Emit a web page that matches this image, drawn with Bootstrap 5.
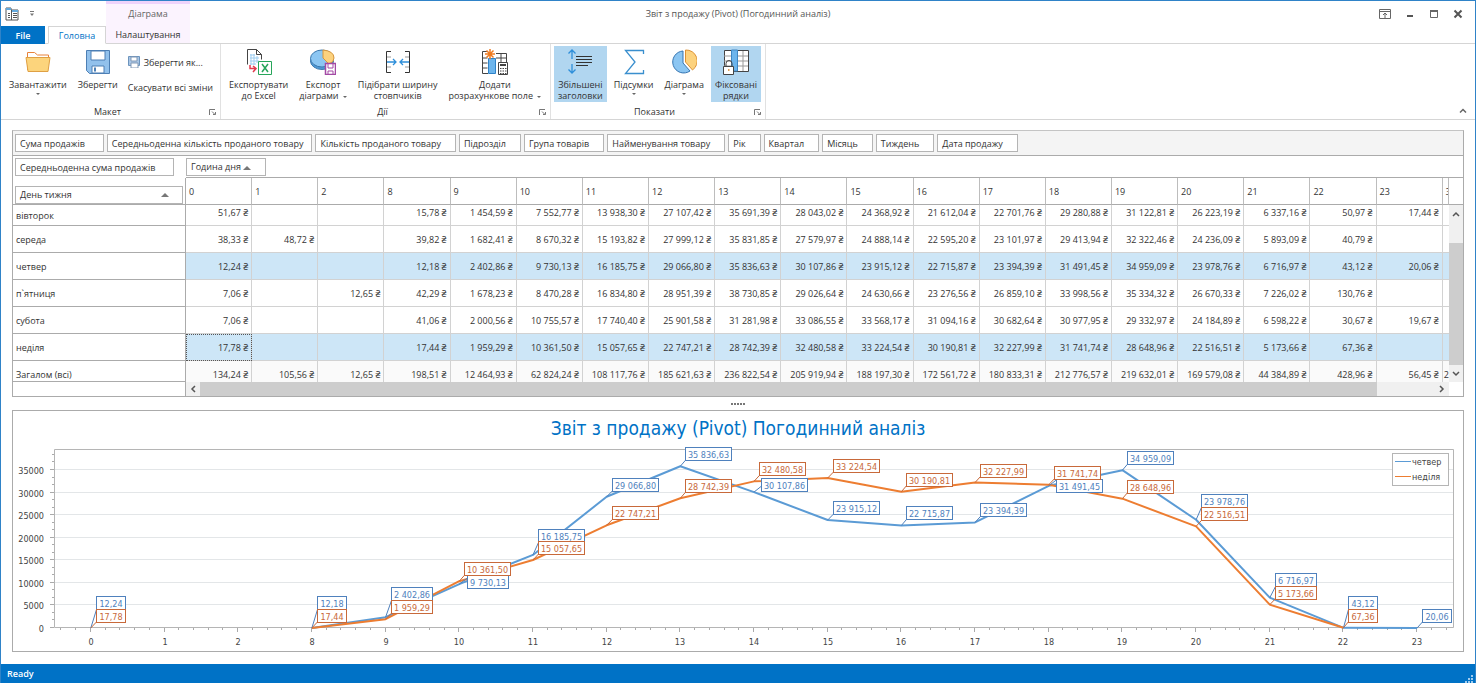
<!DOCTYPE html>
<html lang="uk">
<head>
<meta charset="utf-8">
<meta name="viewport" content="width=device-width, initial-scale=1">
<title>Звіт з продажу (Pivot)</title>
<link href="https://cdn.jsdelivr.net/npm/bootstrap@5.3.0/dist/css/bootstrap.min.css" rel="stylesheet">
<style>
:root{--ui:"Open Sans","Noto Sans",sans-serif;--line:#ababab;--soft:#d2d2d2;--blue:#0072c6;--pick:#cde6f7}
body{font-family:var(--ui);font-size:9px;line-height:11px;color:#333;background:#fff}
button{font:inherit;color:inherit;background:none;border:0;padding:0}
svg{display:block}
.app-window{border:1px solid #2f83c8;border-bottom:0}
.title-row{display:grid;grid-template-columns:1fr auto 1fr;height:25px}
.quick-bar{width:105px;padding-left:4px;gap:9px}
.ctx-caption{width:84px;background:#fbf3fe;box-shadow:inset 0 3px #eed3fb;color:#666}
.title-text{color:#555}
.win-buttons{gap:14px;padding-right:12px}
.tab-row{height:18px;border-bottom:1px solid #d5d5d5}
.tab-row button{height:18px}
.tab-file{width:44px;background:var(--blue);color:#fff;font-weight:600}
.tab-row .tab-home{width:58px;margin-left:3px;border:1px solid #d5d5d5;border-bottom-color:#fff;color:var(--blue);background:#fff}
.tab-ctx{width:84px;background:#fbf3fe;border-bottom:1px solid #d5d5d5}
.ribbon{height:76px;border-bottom:1px solid #d5d5d5}
.ribbon-group{position:relative;padding:2px 0 0 4px;border-right:1px solid #e1e1e1}
.g-layout{width:220px}.g-actions{width:330px}.g-show{width:215px;padding-left:3px}
.tool-list{gap:3px;height:56px}
.tool{height:56px;padding:3px 4px 0;white-space:nowrap;display:flex;flex-direction:column;align-items:center}
.tool svg.ico{width:26px;height:26px;margin-bottom:4px}
.tool.picked{background:#b1d6f0}
.caret-down{display:inline-block;border:2px solid transparent;border-top-color:#666;border-bottom:0;vertical-align:middle;margin-left:2px}
.tool>.caret-down{margin:3px 0 0}
.small-tools{gap:14px;padding:10px 0 0 3px;white-space:nowrap}
.group-name{height:17px;padding:4px 10px 0 0}
.launcher{position:absolute;right:4px;bottom:4px}
.collapse-btn{padding:0 8px 5px 0}
.main-area{padding:10px 11px 12px}
.pivot,.chart-panel{border:1px solid var(--line)}
.pivot{border-top-color:#c4c4c4}
.filter-row{background:#f4f4f4;height:25px;padding:3px 2px 0;gap:3px;border-bottom:1px solid var(--line)}
.chip{height:18px;border:1px solid #b4b4b4;background:#fff;padding:0 14px 0 4px;white-space:nowrap;text-align:left}
.chip.snug{padding-right:8px}
.chip.roomy{padding-right:18px}
.pivot-table{border-collapse:separate;border-spacing:0;table-layout:fixed;width:100%}
.pivot-table th,.pivot-table td{font-weight:400;padding:0;overflow:hidden;white-space:nowrap;height:27px}
.pivot-table .c-name{width:173px}.pivot-table .c-cut{width:6px}
.pivot-table thead th{vertical-align:middle}
.pivot-table thead tr:first-child th{height:22px;border-bottom:1px solid var(--line)}
.pivot-table thead tr:first-child th:first-child{border-bottom:0;padding-left:2px}
.pivot-table thead .hour{border-right:1px solid #bdbdbd;border-bottom:1px solid var(--line);padding-left:3px}
.pivot-table thead .corner{border-right:1px solid var(--line);border-bottom:1px solid var(--line);padding:7px 2px 0}
.corner .chip{padding-right:13px}
.pivot-table tbody th{border-right:1px solid var(--line);border-bottom:1px solid var(--line);padding-left:3px}
.pivot-table tbody td{border-right:1px solid var(--soft);border-bottom:1px solid var(--soft);text-align:right;padding-right:3px}
.pivot-table tbody td:last-child{border-right:0;padding-right:0}
.pivot-table .picked td{background:var(--pick)}
.pivot-table .first-row th,.pivot-table .first-row td{height:21px}
.pivot-table .first-row td{padding-bottom:6px}
.pivot-table .total-row th,.pivot-table .total-row td{height:21px;padding-top:6px}
.pivot-table .total-row td{background:#fafafa;border-bottom:0}
.pivot-table td.focus-cell{outline:1px dotted #555;outline-offset:-1px}
.caret-up{display:inline-block;border:4px solid transparent;border-bottom-color:#777;border-top:0;vertical-align:middle}
.side{width:14px;flex:none}
.side-top{height:22px;border-bottom:1px solid var(--line)}
.side-head{height:27px;border-bottom:1px solid var(--line)}
.arrow-box{background:#f0f0f0;display:flex;align-items:center;justify-content:center}
.side .arrow-box{height:17px}
.track{background:#f0f0f0}.thumb{background:#cdcdcd}
.side .track{height:21px}
.foot{height:14px}
.foot-name{width:173px;border-right:1px solid var(--line)}
.foot .arrow-box{width:14px}
.foot .track{width:58px}
.splitter{height:13px}
.splitter i{width:2px;height:2px;background:#777}
.chart-panel{height:242px;background:#fff}
.chart-panel text{font-family:"DejaVu Sans Condensed","DejaVu Sans",sans-serif;font-stretch:condensed;font-size:9px}
.chart-panel .chart-title{font-size:19px;fill:var(--blue)}
.status{height:19px;background:var(--blue);color:#fff;font-weight:600;padding:0 1px 0 6px}
</style>
</head>
<body>
<div class="app-window min-vh-100 d-flex flex-column">
<header>
  <div class="title-row">
    <div class="d-flex">
      <div class="quick-bar d-flex align-items-center">
        <svg width="15" height="14" viewBox="0 0 15 14"><path d="M1 1h5v2h7v10H1z" fill="#fff" stroke="#555"/><path d="M1 1h5v2H1zM7 3h6v2H7z" fill="#62a8dc"/><path d="M3 6.500h2M3 8.500h2M3 10.500h2M8 6.500h4M8 8.500h4M8 10.500h4M6.500 3v10" stroke="#555"/></svg>
        <button aria-label="Панель швидкого доступу"><svg width="6" height="6"><path d="M1 .5h4" stroke="#777"/><path d="M1 2.500h4l-2 2.500z" fill="#777"/></svg></button>
      </div>
      <div class="ctx-caption d-flex align-items-center justify-content-center">Діаграма</div>
    </div>
    <div class="title-text align-self-center">Звіт з продажу (Pivot) (Погодинний аналіз)</div>
    <div class="win-buttons d-flex align-items-center justify-content-end">
      <button aria-label="Стрічка"><svg width="12" height="10" fill="none" stroke="#666"><path d="M.5.5h11v9H.5zM.5 2.500h11M6 9V4M4 6l2-2 2 2"/></svg></button>
      <button aria-label="Згорнути"><svg width="10" height="10"><path d="M2 7h6" stroke="#555" stroke-width="2"/></svg></button>
      <button aria-label="Розгорнути"><svg width="10" height="10" fill="none" stroke="#666"><path d="M1.500 1.500h7v7h-7z"/><path d="M1 2h8" stroke-width="2"/></svg></button>
      <button aria-label="Закрити"><svg width="10" height="10"><path d="M1.500 1.500l7 7M8.500 1.500l-7 7" stroke="#555" stroke-width="2"/></svg></button>
    </div>
  </div>
  <nav class="tab-row d-flex">
    <button class="tab-file">File</button><button class="tab-home">Головна</button><button class="tab-ctx">Налаштування</button>
  </nav>
  <div class="ribbon d-flex">
    <section class="ribbon-group g-layout">
      <div class="tool-list d-flex">
        <button class="tool"><svg class="ico" viewBox="0 0 26 26"><path d="M2.500 21V3.500h7l3 2.500h11v6" fill="#fff" stroke="#e8823a"/><path d="M1 8.500h24l-2 14H3z" fill="#fcd47c" stroke="#dfa044"/></svg>Завантажити<span class="caret-down"></span></button>
        <button class="tool"><svg class="ico" viewBox="0 0 26 26"><path d="M1.500 1.500h23v23h-20l-3-3z" fill="#92c1ec" stroke="#4d7fb4"/><path d="M6 2h14v9H6zM7 17h12v7H7z" fill="#fff" stroke="#4d7fb4"/><path d="M10 18.500v4" stroke="#4d7fb4" stroke-width="2"/></svg>Зберегти</button>
        <div class="small-tools d-flex flex-column align-items-start">
          <button class="d-flex align-items-center gap-1"><svg width="12" height="12"><path d="M.5.5h11v9H.5z" fill="#a9c6e6" stroke="#6c94bd"/><path d="M3 1h6v4H3zM3 7h7v5H3z" fill="#fff" stroke="#8299b5"/></svg>Зберегти як...</button>
          <button>Скасувати всі зміни</button>
        </div>
      </div>
      <div class="group-name text-center">Макет</div>
      <button class="launcher" aria-label="Параметри макета"><svg width="7" height="6" fill="none" stroke="#777"><path d="M.5 6V.5H6M3 2.500l3 3M6.500 3v2.500H4"/></svg></button>
    </section>
    <section class="ribbon-group g-actions">
      <div class="tool-list d-flex">
        <button class="tool"><svg class="ico" viewBox="0 0 26 26"><path d="M1.500 15.500v-15h9l5 5v5" fill="#fff" stroke="#444"/><path d="M10.500.5v5h5" fill="none" stroke="#444"/><path d="M4 6h5M4 9h9M4 12h9M4 15h6M5 5v11M8 5v11M11 7v7" stroke="#9dcdf0"/><path d="M4 16v3.500h6M7 17l3 2.500L7 23" fill="none" stroke="#e23b4f" stroke-width="1.500"/><path d="M12.500 12.500h13v13h-13z" fill="#fff" stroke="#27a55a"/><path d="M16 15l6 8M22 15l-6 8" stroke="#27a55a" stroke-width="1.500"/></svg>Експортувати<br>до Excel</button>
        <button class="tool"><svg class="ico" viewBox="0 0 26 26"><ellipse cx="12" cy="12" rx="11.500" ry="8.500" fill="#4e99d6" stroke="#3c78ad"/><ellipse cx="12" cy="9.500" rx="11.500" ry="8.500" fill="#8cc6f2" stroke="#3c78ad"/><path d="M13 1v8l6 6q5-2 5-6 0-7-11-8z" fill="#fcd27e" stroke="#d9973b"/><path d="M15.500 14.500h10v11h-10z" fill="#fff" stroke="#a349a4" stroke-width="1.500"/><path d="M18 15v4h5v-4M18 25v-3h5v3" fill="none" stroke="#a349a4"/></svg>Експорт<span>діаграми <span class="caret-down"></span></span></button>
        <button class="tool"><svg class="ico" viewBox="0 0 26 26" fill="none"><path d="M6 2.500H1.500v21H6M20 2.500h4.500v21H20" stroke="#333"/><path d="M2 8h4M2 18h4M20 8h4M20 18h4" stroke="#999"/><path d="M2 13h9M8 10l3 3-3 3M24 13h-9M18 10l-3 3 3 3" stroke="#2e8fda" stroke-width="1.300"/></svg>Підібрати ширину<br>стовпчиків</button>
        <button class="tool"><svg class="ico" viewBox="0 0 26 26" fill="none"><path d="M6 2.500H.5v22H6M.5 9h5M.5 14h5M.5 19h5M14 4.500h10.500V14M14 9h10.500M19 4v9" stroke="#444"/><path d="M6.500 9.500h7v15h-7z" fill="#6db5ec" stroke="#2f83c8"/><path d="M8 0v10M3 5h10M4.500 1.500l7 7M11.500 1.500l-7 7" stroke="#f07b20" stroke-width="1.500"/><path d="M16.500 13.500h9v12h-9z" fill="#fff" stroke="#444"/><path d="M18 16h6" stroke="#444" stroke-width="2"/><path d="M18 19.500h7M18 22h7M18 24.500h7" stroke="#444" stroke-dasharray="1.500 1"/></svg>Додати<span>розрахункове поле <span class="caret-down"></span></span></button>
      </div>
      <div class="group-name text-center">Дії</div>
      <button class="launcher" aria-label="Параметри дій"><svg width="7" height="6" fill="none" stroke="#777"><path d="M.5 6V.5H6M3 2.500l3 3M6.500 3v2.500H4"/></svg></button>
    </section>
    <section class="ribbon-group g-show">
      <div class="tool-list d-flex">
        <button class="tool picked"><svg class="ico" viewBox="0 0 26 26" fill="none"><path d="M5 10V1M1.500 4.500L5 1l3.500 3.500M5 15v9M1.500 20.500L5 24l3.500-3.500" stroke="#2e8fda" stroke-width="1.300"/><path d="M9 7.500h16M9 10.500h16M9 13.500h16M9 16.500h12" stroke="#333"/></svg>Збільшені<br>заголовки</button>
        <button class="tool"><svg class="ico" viewBox="0 0 26 26" fill="none"><path d="M22.500 5V1.500h-18L14 13 4.500 24.500h18V21" stroke="#3a8fce" stroke-width="1.300"/></svg>Підсумки<span class="caret-down"></span></button>
        <button class="tool"><svg class="ico" viewBox="0 0 26 26"><path d="M12 2a11 11 0 1 0 7 20l-7-8z" fill="#8cc6f2" stroke="#3676b3"/><path d="M14.500 1v12l7 8a11 11 0 0 0-7-20z" fill="#fcd27e" stroke="#dd9234"/></svg>Діаграма<span class="caret-down"></span></button>
        <button class="tool picked"><svg class="ico" viewBox="0 0 26 26"><path d="M1.500 1.500h24v21h-24z" fill="#fff" stroke="#444"/><path d="M1 7h24M1 12h24M1 17h24M20 2v20" stroke="#999"/><path d="M8.500 1h6v21h-6z" fill="#6db5ec" stroke="#3e87c5"/><path d="M3 17v-2.500q0-3 3-3t3 3V17" fill="none" stroke="#444"/><path d="M.5 17.500h10v8H.5z" fill="#fff" stroke="#444"/><path d="M5 21h1.500" stroke="#d88020" stroke-width="1.500"/></svg>Фіксовані<br>рядки</button>
      </div>
      <div class="group-name text-center">Показати</div>
      <button class="launcher" aria-label="Параметри показу"><svg width="7" height="6" fill="none" stroke="#777"><path d="M.5 6V.5H6M3 2.500l3 3M6.500 3v2.500H4"/></svg></button>
    </section>
    <button class="collapse-btn ms-auto align-self-end" aria-label="Згорнути стрічку"><svg width="8" height="6"><path d="M1 4.500l3-3 3 3" fill="none" stroke="#666" stroke-width="1.500"/></svg></button>
  </div>
</header>

<main class="main-area flex-grow-1">
  <section class="pivot">
    <div class="filter-row d-flex">
      <button class="chip roomy">Сума продажів</button><button class="chip snug">Середньоденна кількість проданого товару</button><button class="chip">Кількість проданого товару</button><button class="chip">Підрозділ</button><button class="chip">Група товарів</button><button class="chip">Найменування товару</button><button class="chip">Рік</button><button class="chip">Квартал</button><button class="chip">Місяць</button><button class="chip">Тиждень</button><button class="chip">Дата продажу</button>
    </div>
    <div class="d-flex">
      <table class="pivot-table flex-fill">
        <colgroup id="cols"><col class="c-name"></colgroup>
        <thead>
          <tr><th><button class="chip roomy">Середньоденна сума продажів</button></th><th colspan="20"><button class="chip">Година дня <span class="caret-up"></span></button></th></tr>
          <tr id="hours"><th class="corner"><button class="chip w-100 d-flex align-items-center justify-content-between">День тижня <span class="caret-up"></span></button></th></tr>
        </thead>
        <tbody id="days"></tbody>
      </table>
      <div class="side d-flex flex-column">
        <div class="side-top"></div><div class="side-head"></div>
        <button class="arrow-box" aria-label="Вгору"><svg width="8" height="6"><path d="M1 5l3-3 3 3" fill="none" stroke="#555" stroke-width="1.500"/></svg></button>
        <div class="track"></div><div class="thumb flex-grow-1"></div>
        <button class="arrow-box" aria-label="Вниз"><svg width="8" height="6"><path d="M1 1l3 3 3-3" fill="none" stroke="#555" stroke-width="1.500"/></svg></button>
      </div>
    </div>
    <div class="foot d-flex">
      <div class="foot-name"></div>
      <button class="arrow-box" aria-label="Ліворуч"><svg width="6" height="8"><path d="M5 1L2 4l3 3" fill="none" stroke="#555" stroke-width="1.500"/></svg></button>
      <div class="thumb flex-grow-1"></div><div class="track"></div>
      <button class="arrow-box" aria-label="Праворуч"><svg width="6" height="8"><path d="M1 1l3 3-3 3" fill="none" stroke="#555" stroke-width="1.500"/></svg></button>
      <div class="side"></div>
    </div>
  </section>
  <div class="splitter d-flex align-items-center justify-content-center"><div class="d-flex" style="gap:1px"><i></i><i></i><i></i><i></i><i></i></div></div>
  <section class="chart-panel"><svg id="chart" width="100%" height="240" role="img" aria-label="Погодинний аналіз"></svg></section>
</main>
<footer class="status d-flex align-items-center justify-content-between"><span>Ready</span><svg class="align-self-end" width="10" height="9" fill="#9fcbee"><path d="M7 1h2v2H7zM7 4h2v2H7zM7 7h2v2H7zM4 4h2v2H4zM4 7h2v2H4zM1 7h2v2H1z"/></svg></footer>
</div>
<script src="https://cdn.jsdelivr.net/npm/bootstrap@5.3.0/dist/js/bootstrap.bundle.min.js"></script>
<script>
const hours=[0,1,2,8,9,10,11,12,13,14,15,16,17,18,19,20,21,22,23];
const rows=[
['вівторок','51,67|||15,78|1 454,59|7 552,77|13 938,30|27 107,42|35 691,39|28 043,02|24 368,92|21 612,04|22 701,76|29 280,88|31 122,81|26 223,19|6 337,16|50,97|17,44','first-row'],
['середа','38,33|48,72||39,82|1 682,41|8 670,32|15 193,82|27 999,12|35 831,85|27 579,97|24 888,14|22 595,20|23 101,97|29 413,94|32 322,46|24 236,09|5 893,09|40,79|',''],
['четвер','12,24|||12,18|2 402,86|9 730,13|16 185,75|29 066,80|35 836,63|30 107,86|23 915,12|22 715,87|23 394,39|31 491,45|34 959,09|23 978,76|6 716,97|43,12|20,06','picked'],
['п`ятниця','7,06||12,65|42,29|1 678,23|8 470,28|16 834,80|28 951,39|38 730,85|29 026,64|24 630,66|23 276,56|26 859,10|33 998,56|35 334,32|26 670,33|7 226,02|130,76|',''],
['субота','7,06|||41,06|2 000,56|10 755,57|17 740,40|25 901,58|31 281,98|33 086,55|33 568,17|31 094,16|30 682,64|30 977,95|29 332,97|24 184,89|6 598,22|30,67|19,67',''],
['неділя','17,78|||17,44|1 959,29|10 361,50|15 057,65|22 747,21|28 742,39|32 480,58|33 224,54|30 190,81|32 227,99|31 741,74|28 648,96|22 516,51|5 173,66|67,36|','picked'],
['Загалом (всі)','134,24|105,56|12,65|198,51|12 464,93|62 824,24|108 117,76|185 621,63|236 822,54|205 919,94|188 197,30|172 561,72|180 833,31|212 776,57|219 632,01|169 579,08|44 384,89|428,96|56,45','total-row']];
document.getElementById('cols').insertAdjacentHTML('beforeend','<col>'.repeat(19)+'<col class="c-cut">');
document.getElementById('hours').insertAdjacentHTML('beforeend',hours.map(h=>`<th class="hour">${h}</th>`).join('')+'<th class="hour">З</th>');
document.getElementById('days').innerHTML=rows.map(([n,v,c])=>`<tr class="${c}"><th scope="row">${n}</th>`+v.split('|').map((t,i)=>`<td${n==='неділя'&&i===0?' class="focus-cell"':''}>${t?t+' ₴':''}</td>`).join('')+`<td>${c==='total-row'?'2':''}</td></tr>`).join('');

// Line chart: one series for each picked row. "shift" moves labels that would overlap: hour -> [dx, dy].
const series=[
{name:'четвер',row:2,color:'#5b9bd5',ink:'#4f81bd',shift:{0:[6,-25],8:[6,-25],9:[6,-23],10:[9,-2],11:[6,-19],14:[8,-7],18:[8,0],20:[6,-19],21:[6,-18],22:[6,-25]}},
{name:'неділя',row:5,color:'#ed7d31',ink:'#c8693a',shift:{}}];
const chart=document.getElementById('chart');
function draw(){
  const W=chart.clientWidth,L=41,R=W-9,T=38,B=217,step=(R-L)/hours.length;
  const X=i=>L+(i+.5)*step,Y=v=>B-v*158/35000,r=Math.round;
  let s=`<text class="chart-title" x="${W/2}" y="24" text-anchor="middle">Звіт з продажу (Pivot) Погодинний аналіз</text>`;
  let grid='',tick='';
  for(let v=0;v<=35000;v+=5000){
    const y=r(Y(v))-.5;
    if(v)grid+=`M${L} ${y}H${R}`;
    tick+=`M${L-4} ${y}H${L}`;
    for(const m of [1,2]){const q=Y(v+m*5000/3);if(q>T)tick+=`M${L-2} ${r(q)-.5}H${L}`}
    s+=`<text x="${L-10}" y="${y+4}" text-anchor="end" fill="#444">${v}</text>`;
  }
  hours.forEach((h,i)=>{
    for(let k=-2;k<3;k++)tick+=`M${r(X(i)+k*step/5)-.5} ${B}v${k?2:4}`;
    s+=`<text x="${r(X(i))}" y="234" text-anchor="middle" fill="#444">${h}</text>`;
  });
  s+=`<path d="${grid}" stroke="#e3e6e8"/><path d="${tick}" stroke="#aaa"/><path d="M${L+.5} ${T+.5}H${R-.5}V${B-.5}H${L+.5}z" fill="none" stroke="#b5b5b5"/>`;
  const pts=series.map(q=>rows[q.row][1].split('|').map((t,i)=>t&&{t,i,x:X(i),y:Y(parseFloat(t.replace(/ /g,'').replace(',','.')))}).filter(Boolean));
  series.forEach((q,k)=>{
    let d='';
    pts[k].forEach((p,j)=>{if(j&&pts[k][j-1].i===p.i-1)d+=`L${p.x} ${p.y}`;else d+=`M${p.x} ${p.y}`});
    s+=`<path d="${d}" fill="none" stroke="${q.color}" stroke-width="2" stroke-linejoin="round"/>`;
  });
  series.forEach((q,k)=>pts[k].forEach(p=>{
    const [dx,dy]=q.shift[hours[p.i]]||[6,-12],w={5:29,8:41,9:46}[p.t.length];
    const x=r(p.x+dx)-.5,y=r(p.y+dy)-6.5;
    s+=`<path d="M${p.x} ${p.y}L${x} ${Math.min(y+13,Math.max(y,p.y-6))}" stroke="${q.ink}"/><rect x="${x}" y="${y}" width="${w}" height="13" fill="#fff" stroke="${q.ink}"/><text x="${x+w/2}" y="${y+10}" text-anchor="middle" fill="${q.ink}">${p.t}</text>`;
  }));
  s+=`<rect x="${R-61.5}" y="42.500" width="56" height="32" fill="#fff" stroke="#b5b5b5"/>`;
  series.forEach((q,k)=>{s+=`<path d="M${R-59} ${50.5+k*15}h16" stroke="${q.color}"/><text x="${R-42}" y="${54+k*15}" fill="#444">${q.name}</text>`});
  chart.innerHTML=s;
}
draw();addEventListener('resize',draw);
</script>
</body>
</html>
